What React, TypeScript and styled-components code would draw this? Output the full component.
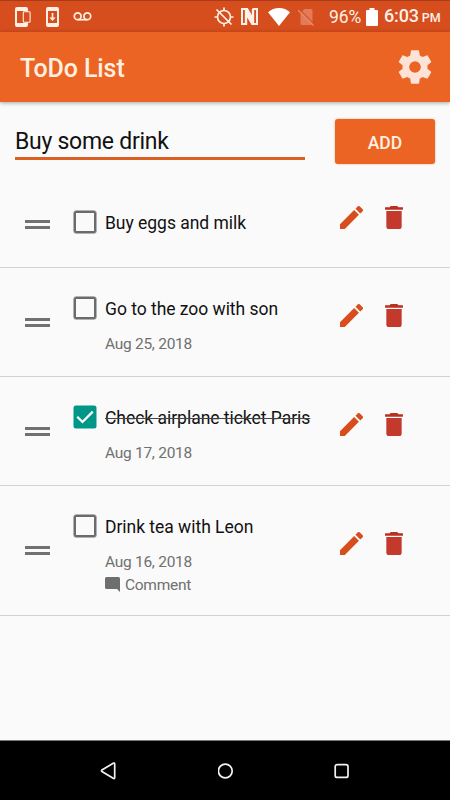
import React, { useState } from "react";
import styled, { createGlobalStyle } from "styled-components";

const GlobalStyle = createGlobalStyle`
  *, *::before, *::after { box-sizing: border-box; }
  body { margin: 0; background: #fafafa; font-family: Roboto, sans-serif; }
  svg { display: block; flex: none; }
`;

const Screen = styled.div`
  display: flex;
  flex-direction: column;
  width: 450px;
  height: 800px;
  overflow: hidden;
  background: #fafafa;
`;

const StatusBar = styled.div`
  display: flex;
  justify-content: space-between;
  flex: none;
  height: 32px;
  padding: 0 10px 0 15px;
  background: #d64d1e;
  border-top: 1px solid #a83c18;
  color: #fff0e6;
`;

const StatusGroup = styled.div`
  display: flex;
  align-items: center;
`;

const Gap = styled.span<{ $w: number }>`
  flex: none;
  width: ${(p) => p.$w}px;
`;

const Battery = styled.span`
  width: 34px;
  font-size: 17.5px;
  letter-spacing: -0.1px;
  white-space: nowrap;
  line-height: 20px;
`;

const Clock = styled.span`
  width: 56px;
  display: flex;
  align-items: baseline;
  font-size: 18px;
  font-weight: 500;
  line-height: 20px;
  letter-spacing: -0.15px;
  white-space: nowrap;
`;

const Meridiem = styled.span`
  margin-left: 3px;
  font-size: 12.5px;
`;

const AppBar = styled.header`
  display: flex;
  align-items: center;
  justify-content: space-between;
  flex: none;
  height: 70px;
  padding: 0 15px 0 20px;
  background: #ec6424;
  box-shadow: 0 1px 4px rgba(0, 0, 0, 0.35);
`;

const Title = styled.h1`
  margin: 3px 0 0;
  font-size: 25px;
  font-weight: 500;
  line-height: 30px;
  letter-spacing: -0.1px;
  color: #fff0e2;
`;

const IconButton = styled.button`
  display: flex;
  padding: 0;
  border: 0;
  background: none;
`;

const Composer = styled.div`
  display: flex;
  align-items: flex-start;
  justify-content: space-between;
  flex: none;
  height: 79px;
  padding: 17px 15px 0;
`;

const TextField = styled.input`
  width: 290px;
  height: 41px;
  padding: 6px 0 0;
  border: 0;
  border-bottom: 3px solid #dc5f24;
  outline: 0;
  background: transparent;
  font: 400 23px Roboto, sans-serif;
  letter-spacing: -0.27px;
  color: #111;
`;

const AddButton = styled.button`
  width: 100px;
  height: 45px;
  padding: 2px 0 0;
  border: 0;
  border-radius: 3px;
  background: #ec6424;
  box-shadow: 0 0 2px rgba(200, 80, 20, 0.5);
  font: 500 17.5px Roboto, sans-serif;
  color: #fff0e0;
`;

const List = styled.ul`
  flex: 1;
  margin: 0;
  padding: 0;
  list-style: none;
`;

const Item = styled.li<{ $height: number; $compact: boolean }>`
  display: grid;
  grid-template-columns: 49px 31px 235px 45px 18px;
  align-items: center;
  height: ${(p) => p.$height}px;
  padding: ${(p) => (p.$compact ? "1px" : "0")} 0 0 25px;
  border-bottom: 1px solid #d2d2d2;
`;

const Handle = styled.span`
  width: 25px;
  height: 9px;
  border: solid #717171;
  border-width: 3px 0;
`;

const CheckBox = styled.button<{ $checked: boolean }>`
  display: flex;
  align-items: center;
  justify-content: center;
  align-self: start;
  width: 22px;
  height: 22px;
  margin-top: 29.4px;
  padding: 0;
  border: 2px solid ${(p) => (p.$checked ? "#009688" : "#6b6b6b")};
  border-radius: 2px;
  box-shadow: 0 0 0 0.5px ${(p) => (p.$checked ? "#009688" : "#6b6b6b")};
  background: ${(p) => (p.$checked ? "#009688" : "transparent")};
`;

const Details = styled.div`
  align-self: start;
  padding-top: 30px;
`;

const Label = styled.div<{ $done: boolean }>`
  height: 22px;
  font-size: 17.5px;
  line-height: 23px;
  letter-spacing: -0.03px;
  color: #111;
  white-space: nowrap;
  text-decoration: ${(p) => (p.$done ? "line-through 1px #444" : "none")};
`;

const Meta = styled.div`
  display: flex;
  align-items: center;
  gap: 5px;
  height: 23px;
  font-size: 15.5px;
  line-height: 23px;
  letter-spacing: -0.28px;
  color: #707070;
  white-space: nowrap;
`;

const MetaBlock = styled.div`
  padding-top: 13.4px;
`;

const RowAction = styled(IconButton)`
  margin-bottom: 14px;
`;

const NavBar = styled.nav`
  display: flex;
  align-items: center;
  justify-content: space-between;
  flex: none;
  height: 60px;
  padding: 0 100px;
  background: #000;
  border-top: 1px solid #777;
`;

const EditIcon = () => (
  <svg width="23" height="23" viewBox="3 3 18 18" fill="#d84d1c">
    <path d="M3 17.25V21h3.75L17.81 9.94l-3.75-3.75L3 17.25zM20.71 7.04a1 1 0 0 0 0-1.41l-2.34-2.34a1 1 0 0 0-1.41 0l-1.83 1.83 3.75 3.75 1.83-1.83z" />
  </svg>
);

const TrashIcon = () => (
  <svg width="18" height="23" viewBox="5 3 14 18" fill="#c3392b">
    <path d="M6 19a2 2 0 0 0 2 2h8a2 2 0 0 0 2-2V7H6v12z" />
    <path d="M19 4h-3.5l-1-1h-5l-1 1H5v2h14V4z" fill="#b92f20" />
  </svg>
);

const GearIcon = () => (
  <svg width="40" height="40" viewBox="0 0 24 24" fill="#fde2d6">
    <path d="M19.43 12.98c.04-.32.07-.64.07-.98s-.03-.66-.07-.98l2.11-1.65c.19-.15.24-.42.12-.64l-2-3.46c-.12-.22-.39-.3-.61-.22l-2.49 1c-.52-.4-1.08-.73-1.69-.98l-.38-2.65A.49.49 0 0 0 14 2h-4c-.25 0-.46.18-.49.42l-.38 2.65c-.61.25-1.17.59-1.69.98l-2.49-1c-.23-.09-.49 0-.61.22l-2 3.46c-.13.22-.07.49.12.64l2.11 1.65c-.04.32-.07.65-.07.98s.03.66.07.98l-2.11 1.65c-.19.15-.24.42-.12.64l2 3.46c.12.22.39.3.61.22l2.49-1c.52.4 1.08.73 1.69.98l.38 2.65c.03.24.24.42.49.42h4c.25 0 .46-.18.49-.42l.38-2.65c.61-.25 1.17-.59 1.69-.98l2.49 1c.23.09.49 0 .61-.22l2-3.46c.12-.22.07-.49-.12-.64l-2.11-1.65zM12 15.5a3.5 3.5 0 1 1 0-7 3.5 3.5 0 0 1 0 7z" />
  </svg>
);

const CommentIcon = () => (
  <svg width="15" height="17" viewBox="2 2 20 22.600" fill="#6e6e6e">
    <path d="M22 4a2 2 0 0 0-2-2H4a2 2 0 0 0-2 2v12a2 2 0 0 0 2 2h14l4 4V4z" />
  </svg>
);

const CheckIcon = () => (
  <svg width="18" height="14" viewBox="0 0 18 14" fill="none" stroke="#fff" strokeWidth="2.300">
    <path d="M1.200 6.800 6.500 12 16.800 1.600" />
  </svg>
);

const DevicesIcon = () => (
  <svg width="16" height="20" viewBox="0 0 16 20" fill="none" stroke="currentColor">
    <path fill="currentColor" fillRule="evenodd" stroke="none" d="M2 0h9a2 2 0 0 1 2 2v16a2 2 0 0 1-2 2H2a2 2 0 0 1-2-2V2a2 2 0 0 1 2-2zm0 4v12h9V4z" />
    <rect x="8.300" y="4.700" width="6.800" height="10.600" rx="0.800" fill="#d64d1e" strokeWidth="1.100" />
  </svg>
);

const DownloadIcon = () => (
  <svg width="13" height="20" viewBox="0 0 13 20" fill="currentColor">
    <path fillRule="evenodd" d="M2 0h9a2 2 0 0 1 2 2v16a2 2 0 0 1-2 2H2a2 2 0 0 1-2-2V2a2 2 0 0 1 2-2zm0 4v12h9V4z" />
    <path d="M5.700 6h1.600v4.500h2.400L6.500 14l-3.200-3.500h2.400z" />
  </svg>
);

const VoicemailIcon = () => (
  <svg width="19" height="10" viewBox="0 0 19 10" fill="none" stroke="currentColor" strokeWidth="1.700">
    <circle cx="4.700" cy="4.300" r="3.400" />
    <circle cx="14.300" cy="4.300" r="3.400" />
    <path d="M4.700 7.700h9.600" />
  </svg>
);

const LocationOffIcon = () => (
  <svg width="20" height="20" viewBox="0 0 20 20" fill="none" stroke="currentColor" strokeWidth="1.700">
    <circle cx="10" cy="10" r="6.500" />
    <path d="M10 .5v3M10 16.500v3M.5 10h3M16.500 10h3M2.500 2.500l15 15" />
  </svg>
);

const NfcIcon = () => (
  <svg width="17" height="17" viewBox="0 0 17 17" fill="none" stroke="currentColor">
    <path strokeWidth="2" d="M5.500 1H1v15h4.500M11.500 1H16v15h-4.500" />
    <path fill="currentColor" stroke="none" d="M3.800 17V0h3l4 7V1h2.400v16h-2.600L6.200 9.500V17z" />
  </svg>
);

const WifiIcon = () => (
  <svg width="22" height="18" viewBox="0 0 22 18" fill="#fff">
    <path d="M11 18 0 4.300C3.100 1.500 6.800 0 11 0s7.900 1.500 11 4.300z" />
  </svg>
);

const NoSimIcon = () => (
  <svg width="17" height="18" viewBox="0 0 17 18">
    <path d="M6.500 1H13a1.500 1.500 0 0 1 1.500 1.500v13A1.500 1.500 0 0 1 13 17H4a1.500 1.500 0 0 1-1.500-1.500V5z" fill="#e37a5a" />
    <path d="m.7 .7 16 16" stroke="#d64d1e" strokeWidth="1.200" />
    <path d="m0 2 15.500 15.500" stroke="#e58a6c" strokeWidth="1.300" />
  </svg>
);

const BatteryIcon = () => (
  <svg width="12" height="18" viewBox="0 0 12 18" fill="#fff">
    <path d="M3.500 0h5v2H11a1 1 0 0 1 1 1v14a1 1 0 0 1-1 1H1a1 1 0 0 1-1-1V3a1 1 0 0 1 1-1h2.500z" />
  </svg>
);

const BackIcon = () => (
  <svg width="17" height="18" viewBox="0 0 17 18" fill="none" stroke="#f2f2f2" strokeWidth="1.700" strokeLinejoin="round">
    <path d="M1.900 8q-.9.700 0 1.400l11.300 6.900q1.500.8 1.500-.8V2q0-1.500-1.500-.8z" />
  </svg>
);

const HomeIcon = () => (
  <svg width="16" height="16" viewBox="0 0 16 16" fill="none" stroke="#f2f2f2" strokeWidth="1.700">
    <circle cx="7.300" cy="8" r="6.900" />
  </svg>
);

const RecentsIcon = () => (
  <svg width="16" height="16" viewBox="0 0 16 16" fill="none" stroke="#f2f2f2" strokeWidth="1.700">
    <rect x="1.200" y="1.600" width="12.800" height="12.800" rx="2" />
  </svg>
);

interface Todo {
  label: string;
  date?: string;
  comment?: string;
  done: boolean;
  height: number;
}

const initialTodos: Todo[] = [
  { label: "Buy eggs and milk", done: false, height: 87 },
  { label: "Go to the zoo with son", date: "Aug 25, 2018", done: false, height: 109 },
  { label: "Check airplane ticket Paris", date: "Aug 17, 2018", done: true, height: 109 },
  { label: "Drink tea with Leon", date: "Aug 16, 2018", comment: "Comment", done: false, height: 130 },
];

export default function App() {
  const [todos, setTodos] = useState(initialTodos);
  const [draft, setDraft] = useState("Buy some drink");
  const toggle = (index: number) =>
    setTodos(todos.map((t, i) => (i === index ? { ...t, done: !t.done } : t)));

  return (
    <Screen>
      <GlobalStyle />
      <StatusBar>
        <StatusGroup>
          <DevicesIcon />
          <Gap $w={15} />
          <DownloadIcon />
          <Gap $w={14} />
          <VoicemailIcon />
        </StatusGroup>
        <StatusGroup>
          <LocationOffIcon />
          <Gap $w={7} />
          <NfcIcon />
          <Gap $w={10} />
          <WifiIcon />
          <Gap $w={8} />
          <NoSimIcon />
          <Gap $w={14} />
          <Battery>96%</Battery>
          <Gap $w={3} />
          <BatteryIcon />
          <Gap $w={6} />
          <Clock>
            6:03<Meridiem>PM</Meridiem>
          </Clock>
        </StatusGroup>
      </StatusBar>
      <AppBar>
        <Title>ToDo List</Title>
        <IconButton aria-label="Settings">
          <GearIcon />
        </IconButton>
      </AppBar>
      <Composer>
        <TextField value={draft} onChange={(e) => setDraft(e.target.value)} />
        <AddButton>ADD</AddButton>
      </Composer>
      <List>
        {todos.map((todo, i) => (
          <Item key={todo.label} $height={todo.height} $compact={!todo.date}>
            <Handle />
            <CheckBox $checked={todo.done} onClick={() => toggle(i)} aria-label={todo.label}>
              {todo.done && <CheckIcon />}
            </CheckBox>
            <Details>
              <Label $done={todo.done}>{todo.label}</Label>
              {todo.date && (
                <MetaBlock>
                  <Meta>{todo.date}</Meta>
                  {todo.comment && (
                    <Meta>
                      <CommentIcon />
                      {todo.comment}
                    </Meta>
                  )}
                </MetaBlock>
              )}
            </Details>
            <RowAction aria-label="Edit">
              <EditIcon />
            </RowAction>
            <RowAction aria-label="Delete">
              <TrashIcon />
            </RowAction>
          </Item>
        ))}
      </List>
      <NavBar>
        <BackIcon />
        <HomeIcon />
        <RecentsIcon />
      </NavBar>
    </Screen>
  );
}
